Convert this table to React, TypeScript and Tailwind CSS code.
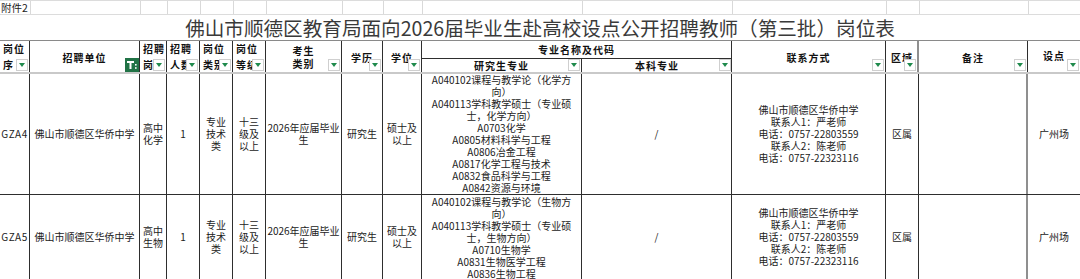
import React from "react";

const W = [
  "w-[30px]",
  "w-[110px]",
  "w-[27px]",
  "w-[33px]",
  "w-[33px]",
  "w-[33px]",
  "w-[76px]",
  "w-[41px]",
  "w-[39px]",
  "w-[160px]",
  "w-[150px]",
  "w-[154px]",
  "w-[33px]",
  "w-[109px]",
  "w-[52px]",
];

function Filter() {
  return (
    <span className="absolute right-[1px] bottom-[1px] flex h-[12px] w-[12px] items-center justify-center border border-[#cfcfcf] bg-white">
      <span className="h-0 w-0 border-x-[3px] border-t-[4px] border-x-transparent border-t-[#1f8a4c]" />
    </span>
  );
}

function ActiveFilter() {
  return (
    <span className="absolute right-0 bottom-0 flex h-[14px] w-[14px] items-center justify-center bg-[#217346]">
      <svg width="12" height="12" viewBox="0 0 12 12">
        <rect x="1" y="2" width="7" height="2" fill="#fff" />
        <rect x="3.5" y="2" width="2" height="8" fill="#fff" />
        <rect x="9" y="5" width="1.6" height="1.6" fill="#fff" />
        <rect x="9" y="8.2" width="1.6" height="1.6" fill="#fff" />
      </svg>
    </span>
  );
}

function H({
  w,
  children,
  filter = true,
  left = false,
  last = false,
}: {
  w: string;
  children: React.ReactNode;
  filter?: boolean;
  left?: boolean;
  last?: boolean;
}) {
  return (
    <div
      className={`${w} relative flex h-full shrink-0 flex-col justify-center overflow-hidden ${
        last ? "" : "border-r border-[#2e2e2e]"
      } ${left ? "items-start pl-[3px]" : "items-center"} text-[10px] font-bold leading-[16px] tracking-[1px] text-[#111]`}
    >
      {children}
      {filter && <Filter />}
    </div>
  );
}

function C({
  w,
  children,
  top = false,
  grey = false,
  last = false,
}: {
  w: string;
  children?: React.ReactNode;
  top?: boolean;
  grey?: boolean;
  last?: boolean;
}) {
  return (
    <div
      className={`${w} flex h-full shrink-0 flex-col items-center overflow-hidden text-center whitespace-nowrap ${
        top ? "justify-start pt-[1px]" : "justify-center"
      } ${
        last ? "" : grey ? "border-r-2 border-[#8f8f8f]" : "border-r border-[#2e2e2e]"
      } text-[10px] leading-[12px] text-[#222]`}
    >
      {children}
    </div>
  );
}

function Lines({ items }: { items: string[] }) {
  return (
    <>
      {items.map((t, i) => (
        <div key={i}>{t}</div>
      ))}
    </>
  );
}

function DataRow({
  code,
  subj,
  majors,
  h,
  top = false,
}: {
  code: string;
  subj: string[];
  majors: string[];
  h: string;
  top?: boolean;
}) {
  return (
    <div className={`flex ${h} border-b border-[#2e2e2e]`}>
      <C w={W[0]}>
        <span className="tracking-[0.5px]">{code}</span>
      </C>
      <C w={W[1]}>佛山市顺德区华侨中学</C>
      <C w={W[2]}>
        <Lines items={subj} />
      </C>
      <C w={W[3]}>1</C>
      <C w={W[4]}>
        <Lines items={["专业", "技术", "类"]} />
      </C>
      <C w={W[5]}>
        <Lines items={["十三", "级及", "以上"]} />
      </C>
      <C w={W[6]}>
        <Lines items={["2026年应届毕业", "生"]} />
      </C>
      <C w={W[7]}>研究生</C>
      <C w={W[8]}>
        <Lines items={["硕士及", "以上"]} />
      </C>
      <C w={W[9]} top={top}>
        <Lines items={majors} />
      </C>
      <C w={W[10]}>/</C>
      <C w={W[11]}>
        <Lines
          items={[
            "佛山市顺德区华侨中学",
            "联系人1：严老师",
            "电话：0757-22803559",
            "联系人2：陈老师",
            "电话：0757-22323116",
          ]}
        />
      </C>
      <C w={W[12]}>区属</C>
      <C w={W[13]} grey />
      <C w={W[14]} last>
        广州场
      </C>
    </div>
  );
}

export default function App() {
  const font = { fontFamily: '"Noto Sans CJK SC", "Noto Sans", sans-serif' };
  return (
    <div
      className="h-[279px] w-[1080px] overflow-hidden bg-white"
      style={font}
    >
      {/* Row 1: 附件2 */}
      <div className="flex h-[15px] border-t border-b border-[#dcdcdc]">
        <div className={`${W[0]} shrink-0 overflow-visible whitespace-nowrap pl-[1px] text-[10.5px] leading-[14px] text-[#222]`}>
          附件2
        </div>
        {W.slice(1).map((w, i) => (
          <div key={i} className={`${w} shrink-0 border-l border-[#d9d9d9]`} />
        ))}
      </div>
      {/* Row 2: title */}
      <div className="flex h-[25px] items-center justify-center text-[19.6px] leading-[25px] text-[#3a3a3a]">
        佛山市顺德区教育局面向2026届毕业生赴高校设点公开招聘教师（第三批）岗位表
      </div>
      {/* Header */}
      <div className="flex h-[32px] border-t border-[#8a8a8a]">
        <H w={W[0]} left>
          <div>岗位</div>
          <div>序</div>
        </H>
        <H w={W[1]} filter={false}>
          <div className="pt-[2px]">招聘单位</div>
          <ActiveFilter />
        </H>
        <H w={W[2]} left>
          <div>招聘</div>
          <div>岗位</div>
        </H>
        <H w={W[3]} left>
          <div>招聘</div>
          <div className="whitespace-nowrap">人数</div>
        </H>
        <H w={W[4]} left>
          <div>岗位</div>
          <div className="whitespace-nowrap">类别</div>
        </H>
        <H w={W[5]} left>
          <div>岗位</div>
          <div className="whitespace-nowrap">等级</div>
        </H>
        <H w={W[6]}>
          <div className="leading-[13px]">考生</div>
          <div className="leading-[13px]">类别</div>
        </H>
        <H w={W[7]}>
          <div className="pt-[2px]">学历</div>
        </H>
        <H w={W[8]}>
          <div className="pt-[2px]">学位</div>
        </H>
        <div className="flex h-full w-[310px] shrink-0 flex-col border-r border-[#2e2e2e]">
          <div className="flex h-[18px] items-center justify-center border-b border-[#2e2e2e] text-[10px] font-bold tracking-[1px] text-[#111]">
            专业名称及代码
          </div>
          <div className="flex flex-1">
            <H w={W[9]}>
              <div className="leading-[13px]">研究生专业</div>
            </H>
            <H w={W[10]} last>
              <div className="leading-[13px]">本科专业</div>
            </H>
          </div>
        </div>
        <H w={W[11]}>
          <div className="pt-[2px]">联系方式</div>
        </H>
        <div className="relative flex h-full w-[33px] shrink-0 items-center overflow-hidden border-r-2 border-[#8f8f8f] pl-[5px] text-[10px] font-bold tracking-[1px] whitespace-nowrap text-[#111]">
          <span className="pt-[2px]">区域</span>
          <Filter />
        </div>
        <H w={W[13]}>
          <div className="pt-[2px]">备注</div>
        </H>
        <H w={W[14]} last>
          <div className="pb-[2px]">设点</div>
        </H>
      </div>
      <div className="h-[2px] bg-[#c9c9c9]" />
      <DataRow
        code="GZA4"
        subj={["高中", "化学"]}
        h="h-[121px]"
        majors={[
          "A040102课程与教学论（化学方",
          "向）",
          "A040113学科教学硕士（专业硕",
          "士，化学方向）",
          "A0703化学",
          "A0805材料科学与工程",
          "A0806冶金工程",
          "A0817化学工程与技术",
          "A0832食品科学与工程",
          "A0842资源与环境",
        ]}
      />
      <DataRow
        code="GZA5"
        subj={["高中", "生物"]}
        h="h-[85px]"
        top
        majors={[
          "A040102课程与教学论（生物方",
          "向）",
          "A040113学科教学硕士（专业硕",
          "士，生物方向）",
          "A0710生物学",
          "A0831生物医学工程",
          "A0836生物工程",
        ]}
      />
    </div>
  );
}
